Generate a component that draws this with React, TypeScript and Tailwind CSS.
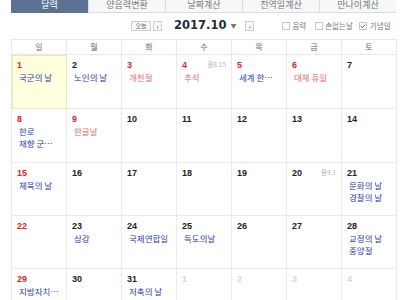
import { Check } from "lucide-react";

type Ev = { t: string; red?: boolean };
type Day = { n: number; red?: boolean; dim?: boolean; today?: boolean; lunar?: string; ev?: Ev[] };

const weeks: Day[][] = [
  [
    { n: 1, red: true, today: true, ev: [{ t: "국군의 날" }] },
    { n: 2, ev: [{ t: "노인의 날" }] },
    { n: 3, red: true, ev: [{ t: "개천절", red: true }] },
    { n: 4, red: true, lunar: "음8.15", ev: [{ t: "추석", red: true }] },
    { n: 5, red: true, ev: [{ t: "세계 한…" }] },
    { n: 6, red: true, ev: [{ t: "대체 휴일", red: true }] },
    { n: 7 },
  ],
  [
    { n: 8, red: true, ev: [{ t: "한로" }, { t: "재향 군…" }] },
    { n: 9, red: true, ev: [{ t: "한글날", red: true }] },
    { n: 10 },
    { n: 11 },
    { n: 12 },
    { n: 13 },
    { n: 14 },
  ],
  [
    { n: 15, red: true, ev: [{ t: "체육의 날" }] },
    { n: 16 },
    { n: 17 },
    { n: 18 },
    { n: 19 },
    { n: 20, lunar: "음9.1" },
    { n: 21, ev: [{ t: "문화의 날" }, { t: "경찰의 날" }] },
  ],
  [
    { n: 22, red: true },
    { n: 23, ev: [{ t: "상강" }] },
    { n: 24, ev: [{ t: "국제연합일" }] },
    { n: 25, ev: [{ t: "독도의날" }] },
    { n: 26 },
    { n: 27 },
    { n: 28, ev: [{ t: "교정의 날" }, { t: "중양절" }] },
  ],
  [
    { n: 29, red: true, ev: [{ t: "지방자치…" }] },
    { n: 30 },
    { n: 31, ev: [{ t: "저축의 날" }] },
    { n: 1, dim: true },
    { n: 2, dim: true },
    { n: 3, dim: true },
    { n: 4, dim: true },
  ],
];

const tabs = ["달력", "양음력변환", "날짜계산", "전역일계산", "만나이계산"];
const dows = ["일", "월", "화", "수", "목", "금", "토"];
const rowH = ["h-[54px]", "h-[54px]", "h-[53px]", "h-[53px]", "h-[53px]"];

const kr = "font-['Noto_Sans_CJK_KR',sans-serif]";

function Box({ checked }: { checked?: boolean }) {
  return (
    <span className="flex h-[8px] w-[8px] items-center justify-center border border-[#c8c8c8] bg-white">
      {checked && <Check className="h-[7px] w-[7px] text-[#2f5fb8]" strokeWidth={4} />}
    </span>
  );
}

export default function App() {
  return (
    <div className={`h-[300px] w-[400px] overflow-hidden bg-white pl-[11px] ${kr}`}>
      {/* Tabs */}
      <div className="flex h-[13px] w-[386px]">
        {tabs.map((t, i) => (
          <div
            key={t}
            className={
              i === 0
                ? "flex w-[77px] items-start justify-center bg-[#5d7292] text-[9px] leading-[10px] text-white"
                : "flex w-[77px] items-start justify-center border-b border-l border-[#d9dce1] bg-[#f6f7f9] text-[9px] leading-[10px] text-[#777]"
            }
          >
            {t}
          </div>
        ))}
      </div>

      {/* Toolbar */}
      <div className="relative flex h-[26px] w-[386px] items-center">
        <div className="ml-[120px] flex items-center">
          <span className="flex h-[10px] w-[20px] items-center justify-center border border-[#cfcfcf] bg-[#f7f7f7] text-[6px] leading-none text-[#666]">
            오늘
          </span>
          <span className="ml-[2px] flex h-[10px] w-[9px] items-center justify-center border border-[#cfcfcf] bg-[#f7f7f7] text-[7px] leading-none text-[#555]">
            ‹
          </span>
          <span className="ml-[12px] font-['DejaVu_Sans',sans-serif] text-[11.5px] font-bold leading-none text-[#1f2a44]">
            2017.10
          </span>
          <span className="ml-[4px] text-[6px] leading-none text-[#777]">▼</span>
          <span className="ml-[9px] flex h-[10px] w-[9px] items-center justify-center border border-[#cfcfcf] bg-[#f7f7f7] text-[7px] leading-none text-[#555]">
            ›
          </span>
        </div>
        <div className="ml-[28px] flex items-center text-[7.5px] leading-none text-[#777]">
          <Box />
          <span className="ml-[2px]">음력</span>
          <span className="ml-[9px]"><Box /></span>
          <span className="ml-[2px]">손없는날</span>
          <span className="ml-[6px]"><Box checked /></span>
          <span className="ml-[3px]">기념일</span>
        </div>
      </div>

      {/* Calendar */}
      <div className="w-[386px] border-l border-t border-[#e6e8eb]">
        <div className="grid h-[15px] grid-cols-7 border-b border-[#e6e8eb]">
          {dows.map((d) => (
            <div key={d} className="flex items-center justify-center border-r border-[#e6e8eb] text-[8px] leading-none text-[#666]">
              {d}
            </div>
          ))}
        </div>
        {weeks.map((w, wi) => (
          <div key={wi} className={`grid grid-cols-7 ${rowH[wi]}`}>
            {w.map((d, di) => (
              <div
                key={di}
                className={
                  d.today
                    ? "relative border border-[#ebe6b4] bg-[#ffffde] pl-[4px] pt-[4px]"
                    : "relative border-b border-r border-[#e9ebee] pl-[5px] pt-[5px]"
                }
              >
                <div
                  className={`font-['Liberation_Sans',sans-serif] text-[9px] font-bold leading-[10px] ${
                    d.dim ? "text-[#d6d6d6]" : d.red ? "text-[#e3232c]" : "text-[#222]"
                  }`}
                >
                  {d.n}
                </div>
                {d.lunar && (
                  <span className="absolute right-[5px] top-[6px] text-[6.5px] leading-none text-[#b5b5b5]">
                    {d.lunar}
                  </span>
                )}
                {d.ev && (
                  <div className="mt-[1px] pl-[2px]">
                    {d.ev.map((e) => (
                      <div
                        key={e.t}
                        className={`whitespace-nowrap text-[8.5px] leading-[12px] ${e.red ? "text-[#e66b6b]" : "text-[#2b3cae]"}`}
                      >
                        {e.t}
                      </div>
                    ))}
                  </div>
                )}
              </div>
            ))}
          </div>
        ))}
      </div>
    </div>
  );
}
